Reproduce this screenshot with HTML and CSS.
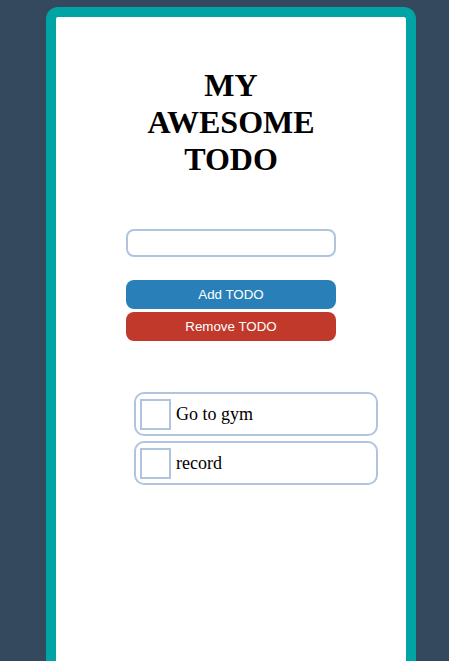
FILE: index.html
```html
<!DOCTYPE html>
<html>
<head>
<meta charset="utf-8">
<link rel="stylesheet" href="styles.css">
</head>
<body>
<div class="card">
  <h1 class="title">MY AWESOME TODO</h1>
  <div class="controls">
    <input class="todo-input" type="text">
    <div class="buttons">
      <button class="btn btn-add">Add TODO</button>
      <button class="btn btn-remove">Remove TODO</button>
    </div>
  </div>
  <ul class="todo-list">
    <li class="todo-item"><span class="check"></span><span class="label">Go to gym</span></li>
    <li class="todo-item"><span class="check"></span><span class="label">record</span></li>
  </ul>
</div>
</body>
</html>
```

FILE: styles.css
```css
html, body {
  margin: 0;
  padding: 0;
  background: #34495e;
  height: 661px;
  overflow: hidden;
}
body {
  padding-top: 7px;
  box-sizing: border-box;
}
.card {
  margin-left: 46px;
  width: 350px;
  height: 654px;
  background: #ffffff;
  border: 10px solid #00a4a4;
  border-bottom: none;
  border-radius: 12px 12px 0 0;
  display: flex;
  flex-direction: column;
  align-items: center;
}
.title {
  margin: 50px 0 0 0;
  width: 200px;
  text-align: center;
  font-family: "Liberation Serif", "Times New Roman", serif;
  font-weight: bold;
  font-size: 32px;
  line-height: 37px;
  color: #000;
}
.controls {
  margin-top: 51px;
  width: 210px;
  display: flex;
  flex-direction: column;
}
.todo-input {
  box-sizing: border-box;
  width: 210px;
  height: 28px;
  margin: 0;
  border: 2px solid #b0c4de;
  border-radius: 8px;
  outline: none;
  background: #fff;
}
.buttons {
  margin-top: 23px;
  display: flex;
  flex-direction: column;
  gap: 3px;
}
.btn {
  box-sizing: border-box;
  width: 210px;
  height: 29px;
  margin: 0;
  padding: 0;
  border: none;
  border-radius: 8px;
  color: #fff;
  font-family: "Liberation Sans", Arial, sans-serif;
  font-size: 13.333px;
}
.btn-add { background: #2980b9; }
.btn-remove { background: #c0392b; }
.todo-list {
  list-style: none;
  margin: 51px 0 0 50px;
  padding: 0;
  width: 244px;
  display: flex;
  flex-direction: column;
  gap: 5px;
}
.todo-item {
  box-sizing: border-box;
  height: 44px;
  border: 2px solid #b0c4de;
  border-radius: 10px;
  padding: 0 4px;
  display: flex;
  align-items: center;
  gap: 5px;
  font-family: "Liberation Serif", "Times New Roman", serif;
  font-size: 18px;
  color: #000;
}
.check {
  box-sizing: border-box;
  width: 31px;
  height: 31px;
  border: 2px solid #b0c4de;
  flex: none;
}
```
